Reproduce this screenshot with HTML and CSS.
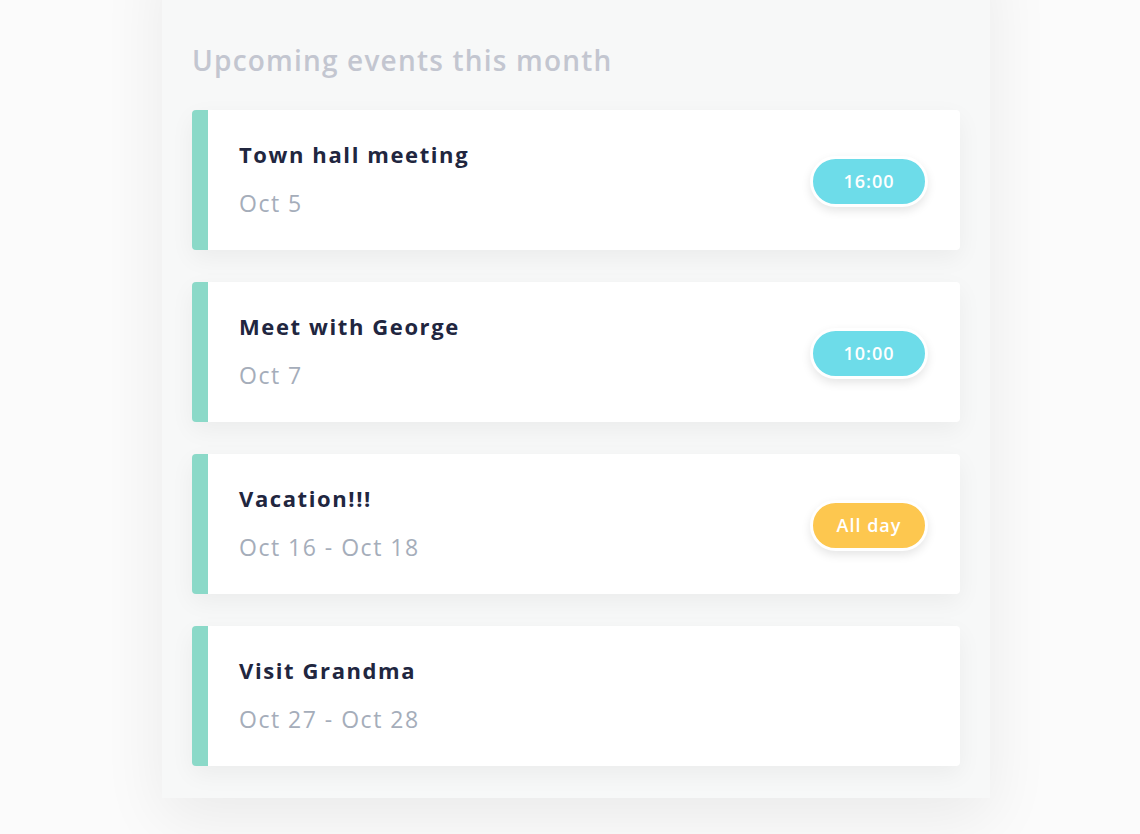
FILE: index.html
```html
<!DOCTYPE html>
<html lang="en">
<head>
<meta charset="utf-8">
<title>Upcoming events</title>
<link rel="stylesheet" href="styles.css">
</head>
<body>
<main class="panel">
  <h2 class="panel-title">Upcoming events this month</h2>
  <ul class="events">
    <li class="event">
      <div class="event-info">
        <div class="event-name">Town hall meeting</div>
        <div class="event-date">Oct 5</div>
      </div>
      <span class="badge badge-time">16:00</span>
    </li>
    <li class="event">
      <div class="event-info">
        <div class="event-name">Meet with George</div>
        <div class="event-date">Oct 7</div>
      </div>
      <span class="badge badge-time">10:00</span>
    </li>
    <li class="event">
      <div class="event-info">
        <div class="event-name">Vacation!!!</div>
        <div class="event-date">Oct 16 - Oct 18</div>
      </div>
      <span class="badge badge-allday">All day</span>
    </li>
    <li class="event">
      <div class="event-info">
        <div class="event-name">Visit Grandma</div>
        <div class="event-date">Oct 27 - Oct 28</div>
      </div>
    </li>
  </ul>
</main>
</body>
</html>
```

FILE: styles.css
```css
html, body {
  margin: 0;
  padding: 0;
}
body {
  background: #fbfbfb;
  font-family: "Open Sans", "Liberation Sans", sans-serif;
  height: 834px;
  overflow: hidden;
}
.panel {
  margin: -60px 0 0 162px;
  width: 828px;
  box-sizing: border-box;
  padding: 100px 30px 32px;
  background: #f7f8f8;
  box-shadow: 0 20px 60px rgba(0, 0, 0, 0.07);
}
.panel-title {
  margin: 0 0 30px;
  font-size: 28px;
  line-height: 40px;
  font-weight: 600;
  color: #c3c6d0;
  letter-spacing: 1.2px;
}
.events {
  list-style: none;
  margin: 0;
  padding: 0;
  display: flex;
  flex-direction: column;
  gap: 32px;
}
.event {
  height: 140px;
  box-sizing: border-box;
  display: flex;
  align-items: center;
  justify-content: space-between;
  padding: 0 32px 0 31px;
  background: #fff;
  border-left: 16px solid #8bd9c8;
  border-radius: 4px;
  box-shadow: 0 8px 24px rgba(0, 0, 0, 0.05);
}
.event-info {
  display: flex;
  flex-direction: column;
  gap: 21px;
  margin-top: -4px;
}
.event-name {
  font-size: 22px;
  line-height: 28px;
  font-weight: 700;
  color: #21263f;
  letter-spacing: 1.6px;
}
.event-date {
  font-size: 23px;
  line-height: 28px;
  font-weight: 500;
  color: #a5adba;
  letter-spacing: 1.5px;
}
.badge {
  display: inline-flex;
  align-items: center;
  justify-content: center;
  width: 118px;
  height: 51px;
  margin-top: 2px;
  box-sizing: border-box;
  border: 3px solid #fff;
  border-radius: 26px;
  color: #fff;
  font-size: 18px;
  font-weight: 600;
  letter-spacing: 1px;
  box-shadow: 0 4px 10px rgba(0, 0, 0, 0.1);
}
.badge-time {
  background: #6ddce9;
}
.badge-allday {
  background: #fdc74f;
}
```
